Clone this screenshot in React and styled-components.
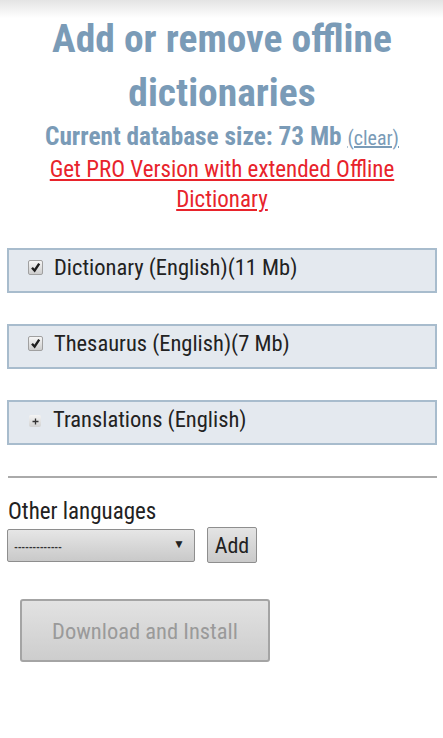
import styled, { createGlobalStyle } from "styled-components"

const GlobalStyle = createGlobalStyle`
  body {
    margin: 0;
    background: linear-gradient(#e4e4e4, #ffffff 18px) no-repeat #fff;
    font-family: "Roboto", "Liberation Sans", sans-serif;
    font-stretch: condensed;
    color: #222;
  }
`

const dictionaries = [
  { label: "Dictionary (English)(11 Mb)", kind: "check" },
  { label: "Thesaurus (English)(7 Mb)", kind: "check" },
  { label: "Translations (English)", kind: "plus" },
]

export default function App() {
  return (
    <Page>
      <GlobalStyle />
      <Title>Add or remove offline dictionaries</Title>
      <SizeLine>
        Current database size: 73 Mb <ClearLink>(clear)</ClearLink>
      </SizeLine>
      <ProLink>Get PRO Version with extended Offline Dictionary</ProLink>

      <DictList>
        {dictionaries.map((d) => (
          <DictRow key={d.label}>
            {d.kind === "check" ? (
              <CheckBox>
                <svg width="11" height="11" viewBox="0 0 11 11">
                  <path d="M2 5.8 L4.6 8.6 L9.2 1.6" fill="none" stroke="#1e1e1e" strokeWidth="2.4" />
                </svg>
              </CheckBox>
            ) : (
              <PlusBox>
                <svg width="7" height="7" viewBox="0 0 7 7">
                  <path d="M3.5 0.5 V6.5 M0.5 3.5 H6.5" stroke="#333" strokeWidth="1.3" />
                </svg>
              </PlusBox>
            )}
            <RowLabel>{d.label}</RowLabel>
          </DictRow>
        ))}
      </DictList>

      <Divider />

      <OtherLabel>Other languages</OtherLabel>
      <AddRow>
        <Select>
          <Dashes>-------------</Dashes>
          <Arrow>▼</Arrow>
        </Select>
        <SmallButton>Add</SmallButton>
      </AddRow>

      <DownloadButton disabled>Download and Install</DownloadButton>
    </Page>
  )
}

const Page = styled.div`
  padding: 12px 6px 40px 7px;
`

const Title = styled.h1`
  margin: 0;
  text-align: center;
  font-size: 39.5px;
  line-height: 54px;
  font-weight: bold;
  color: #7a9bb7;
`

const SizeLine = styled.div`
  margin-top: 2px;
  text-align: center;
  font-size: 25.3px;
  line-height: 30px;
  font-weight: bold;
  color: #7a9bb7;
`

const ClearLink = styled.span`
  font-size: 20px;
  font-weight: normal;
  text-decoration: underline;
`

const ProLink = styled.div`
  margin: 2px auto 0;
  width: 360px;
  text-align: center;
  font-size: 23px;
  line-height: 30px;
  color: #e8232b;
  text-decoration: underline;
`

const DictList = styled.div`
  margin-top: 33px;
  display: flex;
  flex-direction: column;
  gap: 31px;
`

const DictRow = styled.div`
  display: flex;
  align-items: center;
  height: 41px;
  padding-left: 19px;
  background: #e4e9ef;
  border: 2px solid #a8bccd;
`

const CheckBox = styled.span`
  display: flex;
  align-items: center;
  justify-content: center;
  width: 13px;
  height: 13px;
  margin-top: -6px;
  border: 1px solid #a0a0a0;
  border-radius: 2px;
  background: linear-gradient(#f6f6f6, #cdcdcd);
`

const PlusBox = styled.span`
  display: flex;
  align-items: center;
  justify-content: center;
  width: 12px;
  height: 12px;
  margin: -3px 1px 0 1px;
  border-radius: 2px;
  background: linear-gradient(#f4f4f4, #d2d2d2);
`

const RowLabel = styled.span`
  margin-left: 11px;
  margin-top: -7px;
  font-size: 22.5px;
`

const Divider = styled.hr`
  margin: 31px 0 0 1px;
  border: 0;
  border-top: 2px solid #aaa;
`

const OtherLabel = styled.div`
  margin-top: 20px;
  margin-left: 1px;
  font-size: 23px;
  line-height: 28px;
`

const AddRow = styled.div`
  display: flex;
  align-items: center;
  gap: 12px;
  margin-top: 1px;
`

const Select = styled.div`
  box-sizing: border-box;
  display: flex;
  align-items: center;
  justify-content: space-between;
  width: 188px;
  height: 33px;
  padding: 4px 9px 0 6px;
  border: 1px solid #8e8e8e;
  border-radius: 2px;
  background: linear-gradient(#e6e6e6, #c9c9c9);
`

const Dashes = styled.span`
  font-size: 11px;
  font-weight: bold;
  letter-spacing: -0.3px;
  color: #333;
`

const Arrow = styled.span`
  margin-top: -6px;
  font-size: 12px;
`

const SmallButton = styled.button`
  box-sizing: border-box;
  width: 50px;
  height: 36px;
  padding: 0;
  border: 1px solid #8e8e8e;
  border-radius: 2px;
  background: linear-gradient(#e4e4e4, #cacaca);
  font-family: inherit;
  font-stretch: inherit;
  font-size: 22px;
  color: #222;
`

const DownloadButton = styled.button`
  display: block;
  box-sizing: border-box;
  width: 250px;
  height: 63px;
  margin: 36px 0 0 13px;
  padding: 0;
  border: 2px solid #a4a4a4;
  border-radius: 3px;
  background: linear-gradient(#e2e2e2, #cdcdcd);
  font-family: inherit;
  font-stretch: inherit;
  font-size: 22.5px;
  color: #9a9a9a;
`
